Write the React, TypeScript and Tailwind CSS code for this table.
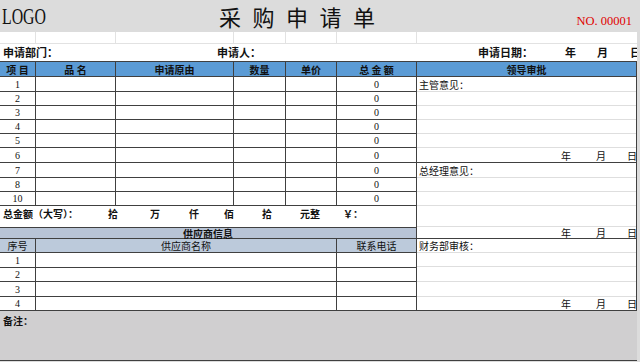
import React from "react";

function DataRow({ n, h }: { n: string; h: string }) {
  return (
    <div className={`flex ${h} border-b border-[#404040]`}>
      <div className="w-[36px] shrink-0 border-r border-[#404040] flex items-center justify-center font-['Liberation_Serif',serif] text-[10px]">{n}</div>
      <div className="w-[80px] shrink-0 border-r border-[#404040]" />
      <div className="w-[118px] shrink-0 border-r border-[#404040]" />
      <div className="w-[52px] shrink-0 border-r border-[#404040]" />
      <div className="w-[51px] shrink-0 border-r border-[#404040]" />
      <div className="w-[80px] shrink-0 border-r border-[#404040] flex items-center justify-center font-['Liberation_Serif',serif] text-[10px]">0</div>
    </div>
  );
}

function SupRow({ n, h }: { n: string; h: string }) {
  return (
    <div className={`flex ${h} border-b border-[#404040] bg-white`}>
      <div className="w-[36px] shrink-0 border-r border-[#404040] flex items-center justify-center font-['Liberation_Serif',serif] text-[10px]">{n}</div>
      <div className="w-[301px] shrink-0 border-r border-[#404040]" />
      <div className="w-[80px] shrink-0 border-r border-[#404040]" />
    </div>
  );
}

function Light({ h, children }: { h: string; children?: React.ReactNode }) {
  return <div className={`${h} border-b border-[#dedede] flex items-center pl-[2px] text-[10px]`}>{children}</div>;
}

function Ymd({ h }: { h: string }) {
  return (
    <div className={`${h} border-b border-[#404040] flex items-center text-[10px]`}>
      <span className="ml-[144px]">年</span>
      <span className="ml-[25px]">月</span>
      <span className="ml-[21px]">日</span>
    </div>
  );
}

export default function App() {
  return (
    <div className="w-[640px] h-[362px] overflow-hidden bg-[#dcdcdc] text-[#111] font-['Noto_Sans_CJK_SC',sans-serif]">
      {/* title band */}
      <div className="h-[32px] flex items-center">
        <div className="w-[219px] shrink-0 pl-[2px]">
          <span className="inline-block origin-left scale-x-[0.66] font-['Liberation_Serif',serif] text-[24px] leading-none">LOGO</span>
        </div>
        <div className="text-[22px] leading-none tracking-[11.5px] whitespace-nowrap">采购申请单</div>
        <div className="ml-auto pr-[8px] mt-[10px] text-[12.5px] font-['Liberation_Serif',serif] text-[#e00000] whitespace-nowrap">NO. 00001</div>
      </div>

      <div className="flex">
        <div className="w-[637px] shrink-0 bg-white">
          {/* empty row */}
          <div className="h-[12px] flex border-b border-[#e2e2e2]">
            <div className="w-[36px] shrink-0 border-r border-[#e2e2e2]" />
            <div className="w-[80px] shrink-0 border-r border-[#e2e2e2]" />
            <div className="w-[118px] shrink-0 border-r border-[#e2e2e2]" />
            <div className="w-[52px] shrink-0 border-r border-[#e2e2e2]" />
            <div className="w-[51px] shrink-0 border-r border-[#e2e2e2]" />
            <div className="w-[80px] shrink-0 border-r border-[#e2e2e2]" />
            <div className="w-[220px] shrink-0" />
          </div>
          {/* info row */}
          <div className="h-[17px] flex items-center overflow-hidden whitespace-nowrap text-[11px] font-bold">
            <span className="ml-[3px] w-[55px] shrink-0">申请部门：</span>
            <span className="ml-[159px] w-[44px] shrink-0">申请人：</span>
            <span className="ml-[217px] w-[55px] shrink-0">申请日期：</span>
            <span className="ml-[32px] shrink-0">年</span>
            <span className="ml-[21px] shrink-0">月</span>
            <span className="ml-[22px] shrink-0">日</span>
          </div>

          {/* main table */}
          <div className="flex">
            {/* left */}
            <div className="w-[417px] shrink-0 flex flex-col">
              <div className="flex h-[16px] border-t border-b border-[#404040] bg-[#5b9bd5] text-[10px] font-bold whitespace-nowrap">
                <div className="w-[36px] shrink-0 border-r border-[#404040] flex items-center justify-center">项 目</div>
                <div className="w-[80px] shrink-0 border-r border-[#404040] flex items-center justify-center">品 名</div>
                <div className="w-[118px] shrink-0 border-r border-[#404040] flex items-center justify-center">申请原由</div>
                <div className="w-[52px] shrink-0 border-r border-[#404040] flex items-center justify-center">数量</div>
                <div className="w-[51px] shrink-0 border-r border-[#404040] flex items-center justify-center">单价</div>
                <div className="w-[80px] shrink-0 border-r border-[#404040] flex items-center justify-center">总 金 额</div>
              </div>
              <DataRow n="1" h="h-[15px]" />
              <DataRow n="2" h="h-[14px]" />
              <DataRow n="3" h="h-[14px]" />
              <DataRow n="4" h="h-[14px]" />
              <DataRow n="5" h="h-[14px]" />
              <DataRow n="6" h="h-[15px]" />
              <DataRow n="7" h="h-[15px]" />
              <DataRow n="8" h="h-[14px]" />
              <DataRow n="10" h="h-[14px]" />
              <div className="h-[14px] flex items-center border-r border-[#404040] text-[10px] font-bold whitespace-nowrap">
                <span className="ml-[3px] w-[80px] shrink-0">总金额（大写）：</span>
                <span className="ml-[25px] shrink-0">拾</span>
                <span className="ml-[32px] shrink-0">万</span>
                <span className="ml-[29px] shrink-0">仟</span>
                <span className="ml-[25px] shrink-0">佰</span>
                <span className="ml-[28px] shrink-0">拾</span>
                <span className="ml-[28px] shrink-0">元整</span>
                <span className="ml-[23px] shrink-0">￥：</span>
              </div>
              <div className="h-[7px] border-r border-[#404040]" />
              <div className="h-[12px] border-t border-b border-r border-[#404040] bg-[#b8c4d6] flex items-center justify-center text-[10px] font-bold">供应商信息</div>
              <div className="flex h-[14px] border-b border-[#404040] bg-[#bccadb] text-[10px] whitespace-nowrap">
                <div className="w-[36px] shrink-0 border-r border-[#404040] flex items-center justify-center">序号</div>
                <div className="w-[301px] shrink-0 border-r border-[#404040] flex items-center justify-center">供应商名称</div>
                <div className="w-[80px] shrink-0 border-r border-[#404040] flex items-center justify-center">联系电话</div>
              </div>
              <SupRow n="1" h="h-[15px]" />
              <SupRow n="2" h="h-[14px]" />
              <SupRow n="3" h="h-[15px]" />
              <SupRow n="4" h="h-[14px]" />
            </div>

            {/* right */}
            <div className="w-[220px] shrink-0 flex flex-col border-r border-[#404040] whitespace-nowrap">
              <div className="h-[16px] border-t border-b border-[#404040] bg-[#5b9bd5] flex items-center justify-center text-[10px] font-bold">领导审批</div>
              <Light h="h-[15px]">主管意见：</Light>
              <Light h="h-[14px]" />
              <Light h="h-[14px]" />
              <Light h="h-[14px]" />
              <Light h="h-[14px]" />
              <Ymd h="h-[15px]" />
              <Light h="h-[15px]">总经理意见：</Light>
              <Light h="h-[14px]" />
              <Light h="h-[14px]" />
              <Light h="h-[21px]" />
              <Ymd h="h-[12px]" />
              <Light h="h-[14px]">财务部审核：</Light>
              <Light h="h-[14px]" />
              <Light h="h-[15px]" />
              <Light h="h-[15px]" />
              <Ymd h="h-[14px]" />
            </div>
          </div>

          {/* remarks */}
          <div className="h-[50px] bg-[#d0cfd0] border-b border-[#404040] pt-[2px] pl-[3px] text-[10px] font-bold">备注：</div>
        </div>
      </div>
    </div>
  );
}
